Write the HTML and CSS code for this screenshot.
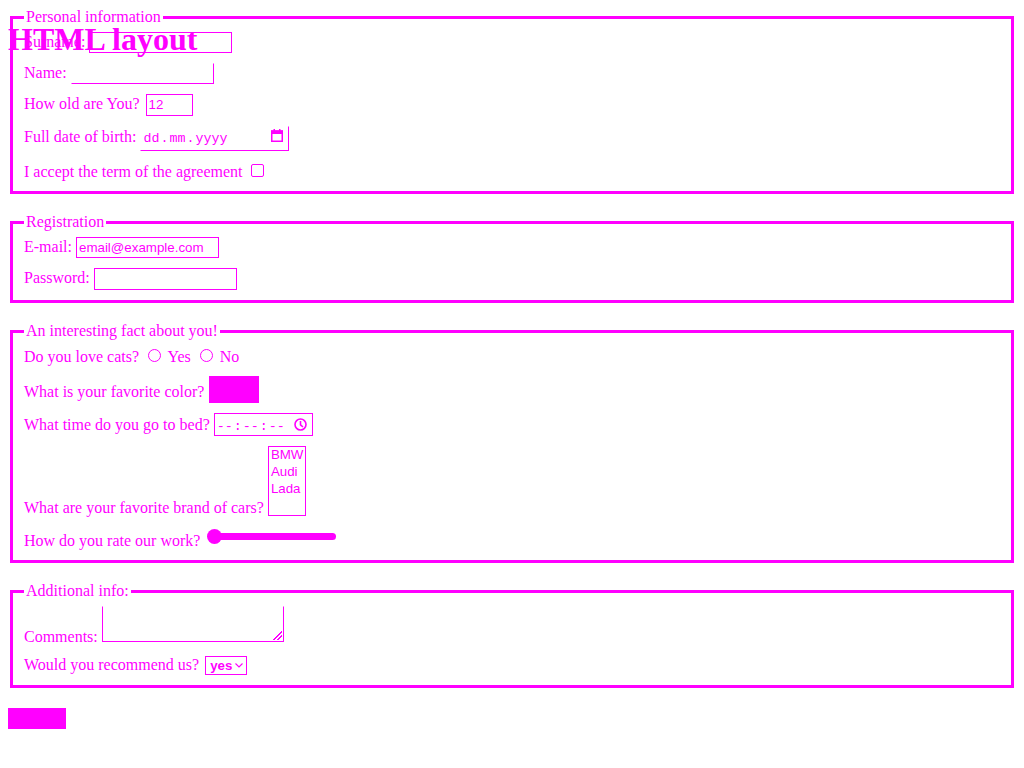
FILE: index.html
```
<!DOCTYPE html>
<html lang="en">
<head>
<meta charset="utf-8">
<title>HTML layout</title>
<link rel="stylesheet" href="styles.css">
</head>
<body>
<h1 class="title">HTML layout</h1>
<form class="form">
  <fieldset class="group">
    <legend class="group-title">Personal information</legend>
    <div class="row"><label>Surname: <input class="field" type="text"></label></div>
    <div class="row"><label>Name: <input class="field field-faint" type="text"></label></div>
    <div class="row"><label>How old are You? <input class="field field-num" type="text" value="12"></label></div>
    <div class="row"><label>Full date of birth: <span class="picker picker-date"><span class="picker-text"><span class="seg">dd</span>.<span class="seg">mm</span>.<span class="seg">yyyy</span></span><svg class="picker-icon icon-cal" width="12" height="13" viewBox="0 0 12 13"><rect x="0.75" y="2" width="10.5" height="10.25" fill="none" stroke="#f0f" stroke-width="1.5"/><rect x="0" y="1.5" width="12" height="3.5" fill="#f0f"/><rect x="2.5" y="0" width="1.5" height="2" fill="#f0f"/><rect x="8" y="0" width="1.5" height="2" fill="#f0f"/></svg></span></label></div>
    <div class="row"><label>I accept the term of the agreement <input class="check" type="checkbox"></label></div>
  </fieldset>

  <fieldset class="group">
    <legend class="group-title">Registration</legend>
    <div class="row"><label>E-mail: <input class="field" type="text" value="email@example.com"></label></div>
    <div class="row"><label>Password: <input class="field" type="password"></label></div>
  </fieldset>

  <fieldset class="group">
    <legend class="group-title">An interesting fact about you!</legend>
    <div class="row">Do you love cats? <label><input class="radio" type="radio" name="cats"> Yes</label> <label><input class="radio" type="radio" name="cats"> No</label></div>
    <div class="row"><label>What is your favorite color? <span class="swatch"></span></label></div>
    <div class="row"><label>What time do you go to bed? <span class="picker picker-time"><span class="picker-text"><span class="seg">--</span>:<span class="seg">--</span>:<span class="seg">--</span></span><svg class="picker-icon icon-clock" width="13" height="13" viewBox="0 0 13 13"><circle cx="6.5" cy="6.5" r="5.5" fill="none" stroke="#f0f" stroke-width="1.6"/><path d="M6.5 3 V6.8 L9 9" fill="none" stroke="#f0f" stroke-width="1.6"/></svg></span></label></div>
    <div class="row"><label>What are your favorite brand of cars? <span class="listbox"><span class="option">BMW</span><span class="option">Audi</span><span class="option">Lada</span></span></label></div>
    <div class="row"><label>How do you rate our work? <span class="range"><span class="range-thumb"></span></span></label></div>
  </fieldset>

  <fieldset class="group">
    <legend class="group-title">Additional info:</legend>
    <div class="row"><label>Comments: <textarea class="comments"></textarea></label></div>
    <div class="row"><label>Would you recommend us? <span class="select">yes<svg class="chevron" width="8" height="5" viewBox="0 0 8 5"><path d="M0.5 0.5 L4 4 L7.5 0.5" fill="none" stroke="#f0f" stroke-width="1.1"/></svg></span></label></div>
  </fieldset>

  <button class="submit" type="submit">Submit</button>
</form>
</body>
</html>
```
FILE: styles.css
```
html {
  background: #fff;
}

body {
  margin: 8px;
  font-family: "Liberation Serif", "Times New Roman", serif;
  font-size: 16px;
  color: #f0f;
}

.title {
  position: absolute;
  top: 0;
  margin: 21.44px 0;
  font-size: 32px;
  font-weight: bold;
  line-height: normal;
}

.form {
  margin: 0;
}

.group {
  margin: 0 2px 19.7px;
  border: 3px solid #f0f;
  padding: 5.6px 12px 10px 11px;
  min-width: 0;
}

.group-title {
  padding: 0 2px;
}

.row {
  margin-bottom: 10px;
}

.row:last-child {
  margin-bottom: 0;
}

.field {
  -webkit-appearance: none;
  appearance: none;
  box-sizing: border-box;
  width: 143px;
  height: 21.33px;
  margin: 0;
  padding: 1px 2px;
  border: 1px solid #f0f;
  border-radius: 0;
  background: #fff;
  color: #f0f;
  font-family: "Liberation Sans", Arial, sans-serif;
  font-size: 13.333px;
  outline: none;
}

.field-faint {
  border-top-color: transparent;
  border-left-color: transparent;
}

.field-num {
  width: 47px;
  margin-left: 2px;
}

.picker {
  display: inline-flex;
  align-items: flex-start;
  box-sizing: border-box;
  border: 1px solid #f0f;
  padding: 4.9px 0 0 1px;
  font-family: "Liberation Mono", "Courier New", monospace;
  font-size: 13.333px;
  line-height: normal;
  vertical-align: baseline;
}

.picker-date {
  width: 149px;
  height: 25px;
  border-top-color: transparent;
  border-left-color: transparent;
}

.picker-time {
  width: 99px;
  height: 23.5px;
}

.seg {
  padding: 0 1px;
}

.picker-icon {
  display: block;
  flex: none;
  margin-left: auto;
}

.icon-cal {
  margin-top: -2.6px;
  margin-right: 5.5px;
}

.icon-clock {
  margin-top: -0.5px;
  margin-right: 4.5px;
}

.check {
  -webkit-appearance: none;
  appearance: none;
  box-sizing: border-box;
  width: 13px;
  height: 13px;
  margin: 3px 3px 0 4px;
  border: 1.5px solid #f0f;
  border-radius: 2px;
  background: #fff;
  vertical-align: baseline;
}

.radio {
  -webkit-appearance: none;
  appearance: none;
  box-sizing: border-box;
  width: 13px;
  height: 13px;
  margin: 3px 3px 0 5px;
  border: 1.3px solid #f0f;
  border-radius: 50%;
  background: #fff;
  vertical-align: baseline;
}

.swatch {
  display: inline-block;
  width: 50px;
  height: 27px;
  margin-left: 1px;
  background: #f0f;
  vertical-align: -6px;
}

.listbox {
  display: inline-block;
  box-sizing: border-box;
  width: 38px;
  height: 70px;
  border: 1px solid #f0f;
  overflow: hidden;
  vertical-align: -3px;
  font-family: "Liberation Sans", Arial, sans-serif;
  font-size: 13.333px;
}

.option {
  display: block;
  height: 17px;
  padding: 0 2px;
  line-height: 16px;
}

.range {
  display: inline-block;
  position: relative;
  width: 129px;
  height: 15px;
  margin: 2px 0 0 3px;
  vertical-align: 1.5px;
}

.range::before {
  content: "";
  position: absolute;
  left: 2px;
  right: 0;
  top: 3.5px;
  height: 7.5px;
  border-radius: 4px;
  background: #f0f;
}

.range-thumb {
  position: absolute;
  left: 0;
  top: 0;
  width: 15px;
  height: 15px;
  border-radius: 50%;
  background: #f0f;
}

.comments {
  box-sizing: border-box;
  width: 182px;
  height: 36px;
  margin: 0;
  padding: 2px;
  border: 1px solid #f0f;
  border-top-color: transparent;
  border-radius: 0;
  resize: none;
  color: #f0f;
  font-family: "Liberation Mono", "Courier New", monospace;
  font-size: 13.333px;
  vertical-align: baseline;
  background-color: #fff;
  background-image: linear-gradient(135deg, transparent 0 48%, #f0f 48% 56%, transparent 56% 72%, #f0f 72% 80%, transparent 80%);
  background-size: 9px 9px;
  background-position: right 1px bottom 1px;
  background-repeat: no-repeat;
  outline: none;
}

.select {
  display: inline-flex;
  align-items: center;
  justify-content: space-between;
  box-sizing: border-box;
  width: 42px;
  height: 19px;
  margin-left: 2px;
  border: 1px solid #f0f;
  padding: 0 3px 0 4px;
  font-family: "Liberation Sans", Arial, sans-serif;
  font-size: 13.333px;
  font-weight: bold;
  vertical-align: baseline;
}

.chevron {
  display: block;
  flex: none;
}

.submit {
  box-sizing: border-box;
  width: 58px;
  height: 21px;
  margin: 0;
  padding: 1px 6px;
  border: 0;
  border-radius: 0;
  background: #f0f;
  color: #f0f;
  font-family: "Liberation Sans", Arial, sans-serif;
  font-size: 13.333px;
}
```
